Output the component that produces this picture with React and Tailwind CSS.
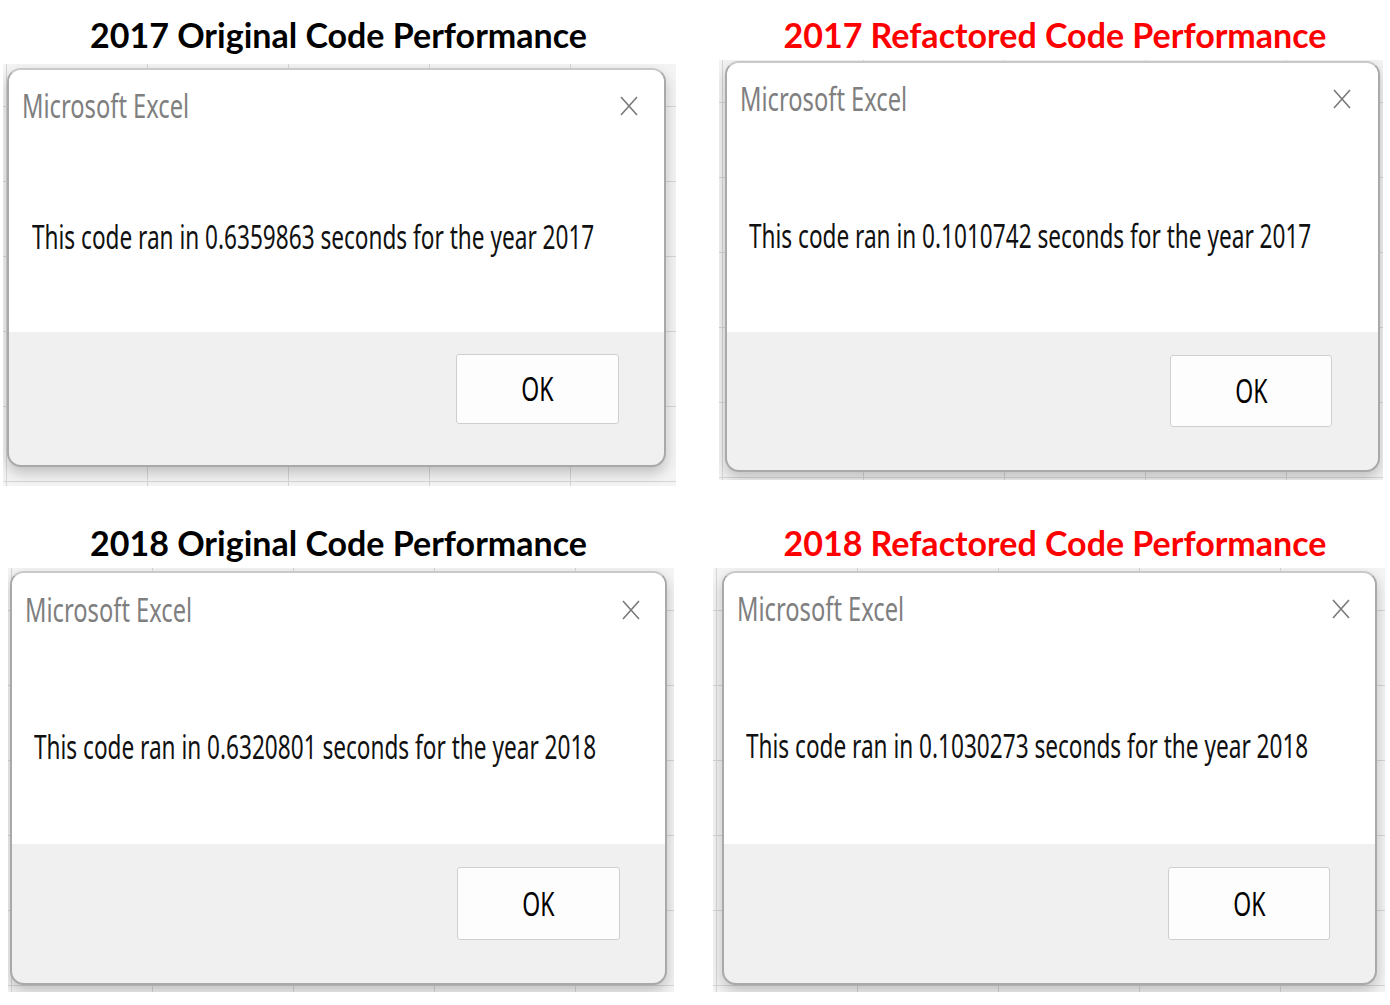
const panels = [
  [
    {
      title: "2017 Original Code Performance",
      red: false,
      titleBox: "w-[677px]",
      shot: "ml-[3px] mt-[9px] w-[673px] h-[422px]",
      dialog: "ml-[4px] mt-[4px] w-[659px] h-[399px]",
      white: "h-[262px]",
      header: "h-[72px] pl-[13px] pr-[26px]",
      body: "mt-[75px] pl-[23px]",
      footer: "pr-[45px] pt-[22px]",
      ok: "w-[163px] h-[70px]",
      text: "This code ran in 0.6359863 seconds for the year 2017",
    },
    {
      title: "2017 Refactored Code Performance",
      red: true,
      titleBox: "w-[710px]",
      shot: "ml-[19px] mt-[5px] w-[664px] h-[420px]",
      dialog: "ml-[6px] mt-[1px] w-[655px] h-[411px]",
      white: "h-[269px]",
      header: "h-[72px] pl-[13px] pr-[27px]",
      body: "mt-[81px] pl-[22px]",
      footer: "pr-[46px] pt-[23px]",
      ok: "w-[162px] h-[72px]",
      text: "This code ran in 0.1010742 seconds for the year 2017",
    },
  ],
  [
    {
      title: "2018 Original Code Performance",
      red: false,
      titleBox: "w-[677px]",
      shot: "ml-[8px] mt-[5px] w-[666px] h-[424px]",
      dialog: "ml-[2px] mt-[3px] w-[657px] h-[414px]",
      white: "h-[271px]",
      header: "h-[74px] pl-[13px] pr-[25px]",
      body: "mt-[80px] pl-[22px]",
      footer: "pr-[45px] pt-[23px]",
      ok: "w-[163px] h-[73px]",
      text: "This code ran in 0.6320801 seconds for the year 2018",
    },
    {
      title: "2018 Refactored Code Performance",
      red: true,
      titleBox: "w-[710px]",
      shot: "ml-[13px] mt-[5px] w-[672px] h-[424px]",
      dialog: "ml-[9px] mt-[3px] w-[655px] h-[414px]",
      white: "h-[271px]",
      header: "h-[72px] pl-[13px] pr-[25px]",
      body: "mt-[81px] pl-[22px]",
      footer: "pr-[45px] pt-[23px]",
      ok: "w-[162px] h-[73px]",
      text: "This code ran in 0.1030273 seconds for the year 2018",
    },
  ],
]

const dialogFont = { fontFamily: '"Noto Sans", "Open Sans", sans-serif' }

function CloseIcon() {
  return (
    <svg width="18" height="20" viewBox="0 0 18 20" fill="none">
      <path d="M1 1L17 19M17 1L1 19" stroke="#7a7a7a" strokeWidth="1.6" />
    </svg>
  )
}

function Panel({ p }) {
  return (
    <div>
      <div
        className={`${p.titleBox} h-[40px] leading-[40px] text-center font-bold text-[34px] ${
          p.red ? "text-[#ff0000]" : "text-black"
        } font-['Lato',sans-serif]`}
      >
        {p.title}
      </div>

      <div
        className={`${p.shot} overflow-hidden bg-[#f4f4f4] bg-[linear-gradient(to_right,#d6d6d6_1px,transparent_1px),linear-gradient(to_bottom,#d6d6d6_1px,transparent_1px)] bg-[length:141px_75px] bg-[position:3px_42px]`}
      >
        <div
          className={`${p.dialog} flex flex-col overflow-hidden rounded-[14px] border-2 border-[#a9a9a9] border-t-[#c9c9c9] bg-[#f0f0f0] shadow-[0_6px_14px_rgba(0,0,0,0.22)]`}
          style={dialogFont}
        >
          <div className={`${p.white} bg-white`}>
            <div className={`${p.header} flex items-center justify-between`}>
              <span className="inline-block origin-left scale-x-[0.74] text-[32px] leading-[40px] text-[#7f7f7f]">
                Microsoft Excel
              </span>
              <CloseIcon />
            </div>
            <div className={`${p.body} h-[40px] leading-[40px]`}>
              <span className="inline-block origin-left scale-x-[0.706] whitespace-nowrap text-[32px] text-[#111]">
                {p.text}
              </span>
            </div>
          </div>
          <div className={`${p.footer} flex justify-end`}>
            <button
              className={`${p.ok} flex items-center justify-center rounded-[3px] border border-[#cfcfcf] bg-[#fdfdfd] text-[32px] text-black`}
            >
              <span className="inline-block scale-x-[0.72]">OK</span>
            </button>
          </div>
        </div>
      </div>
    </div>
  )
}

export default function App() {
  return (
    <div className="w-[1390px] h-[1005px] bg-white overflow-hidden">
      <div className="flex h-[500px] pt-[15px]">
        <div className="w-[700px] shrink-0">
          <Panel p={panels[0][0]} />
        </div>
        <div className="min-w-0 flex-1">
          <Panel p={panels[0][1]} />
        </div>
      </div>
      <div className="flex h-[505px] pt-[23px]">
        <div className="w-[700px] shrink-0">
          <Panel p={panels[1][0]} />
        </div>
        <div className="min-w-0 flex-1">
          <Panel p={panels[1][1]} />
        </div>
      </div>
    </div>
  )
}
